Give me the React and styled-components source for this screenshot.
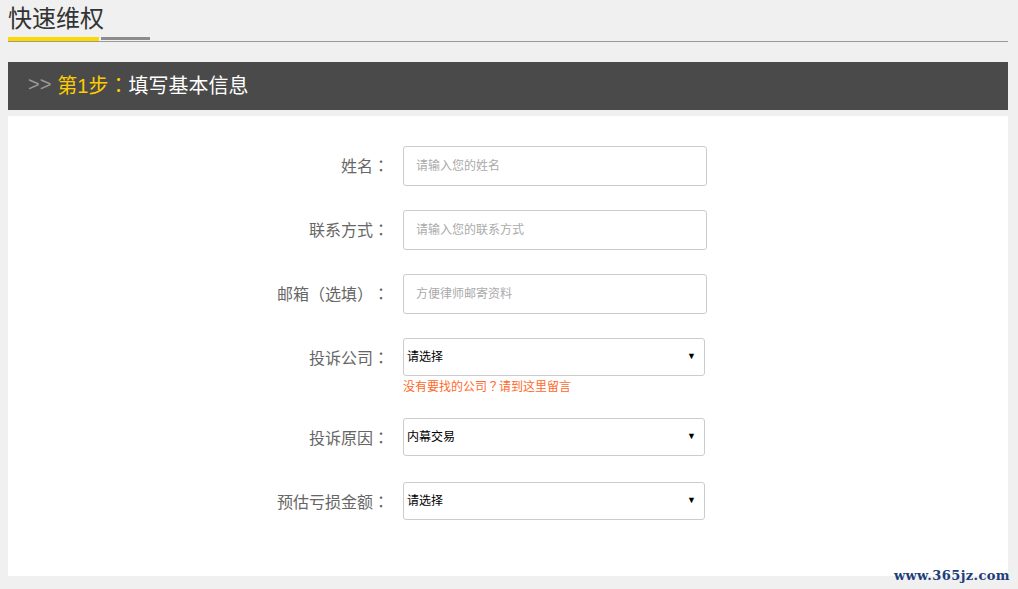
import { createGlobalStyle } from "styled-components";
import styled from "styled-components";

const Global = createGlobalStyle`
  html, body { margin: 0; padding: 0; background: #f0f0f0; }
  body { font-family: "Liberation Sans", "Noto Sans CJK SC", sans-serif; }
  * { box-sizing: border-box; }
`;

const Page = styled.div`
  position: relative;
  padding: 0 10px 13px 8px;
  min-height: 589px;
`;

const TitleBar = styled.div`
  display: flex;
  align-items: flex-end;
  border-bottom: 1px solid #999;
  height: 42px;
`;

const TitleTab = styled.div`
  display: flex;
  flex-direction: column;
`;

const Title = styled.h2`
  margin: 0;
  font-weight: normal;
  font-size: 24px;
  line-height: 36px;
  color: #333;
  padding-top: 3px;
  padding-right: 2px;
`;

const Underline = styled.div`
  display: flex;
  align-items: flex-start;
  gap: 2px;
`;

const Bar = styled.span`
  display: block;
  height: ${(p) => p.$h}px;
  width: ${(p) => p.$w}px;
  background: ${(p) => p.$c};
`;

const StepHeader = styled.div`
  margin-top: 20px;
  height: 48px;
  background: #4a4a4a;
  display: flex;
  align-items: center;
  padding: 0 0 3px 20px;
  font-size: 20px;
  color: #fff;
`;

const Arrows = styled.span`
  color: #999;
  margin-right: 6px;
`;

const Step = styled.span`
  color: #ffcc00;
`;

/* full-width punctuation centred in its box, as the original font draws it */
const Colon = styled.span`
  font-family: "Noto Sans CJK JP", sans-serif;
`;

const Panel = styled.div`
  margin-top: 6px;
  background: #fff;
  padding: 30px 0 32px;
  height: 460px;
`;

const Row = styled.div`
  display: flex;
  align-items: flex-start;
  margin-bottom: 24px;
`;

const Label = styled.label`
  width: 381px;
  height: 40px;
  display: flex;
  align-items: center;
  justify-content: flex-end;
  font-size: 16px;
  color: #666;
  margin-right: 14px;
  padding-bottom: 2px;
`;

const Input = styled.input`
  width: 304px;
  height: 40px;
  border: 1px solid #ccc;
  border-radius: 3px;
  padding: 0 12px;
  font-size: 12px;
  font-family: inherit;
  color: #333;
  outline: none;
  &::placeholder { color: #aaa; }
`;

const Field = styled.div`
  display: flex;
  flex-direction: column;
`;

const SelectBox = styled.div`
  position: relative;
  width: 302px;
  height: 38px;
`;

const Select = styled.select`
  appearance: none;
  width: 100%;
  height: 100%;
  border: 1px solid #ccc;
  border-radius: 3px;
  background: #fff;
  padding: 0 3px;
  font-size: 12px;
  font-family: inherit;
  color: #000;
  outline: none;
`;

const Caret = styled.span`
  position: absolute;
  right: 9px;
  top: 13px;
  font-size: 9px;
  line-height: 10px;
  color: #000;
  pointer-events: none;
`;

const Hint = styled.a`
  display: block;
  margin-top: 2px;
  height: 16px;
  font-size: 12px;
  line-height: 16px;
  color: #ff6a2b;
  text-decoration: none;
  overflow: visible;
`;

const Watermark = styled.div`
  position: absolute;
  right: 8px;
  bottom: 6px;
  font-family: "DejaVu Serif", serif;
  font-weight: bold;
  font-size: 13px;
  color: #1d3d7a;
  letter-spacing: 0.4px;
`;

function Dropdown({ value, options }) {
  return (
    <SelectBox>
      <Select defaultValue={value}>
        {options.map((o) => (
          <option key={o}>{o}</option>
        ))}
      </Select>
      <Caret>▼</Caret>
    </SelectBox>
  );
}

function FieldLabel({ children }) {
  return (
    <Label>
      {children}
      <Colon>：</Colon>
    </Label>
  );
}

export default function App() {
  return (
    <>
      <Global />
      <Page>
        <TitleBar>
          <TitleTab>
            <Title>快速维权</Title>
            <Underline>
              <Bar $w={91} $h={4} $c="#ffd800" />
              <Bar $w={49} $h={3} $c="#8c8c8c" />
            </Underline>
          </TitleTab>
        </TitleBar>

        <StepHeader>
          <Arrows>&gt;&gt;</Arrows>
          <Step>
            第1步<Colon>：</Colon>
          </Step>
          填写基本信息
        </StepHeader>

        <Panel>
          <Row>
            <FieldLabel>姓名</FieldLabel>
            <Input placeholder="请输入您的姓名" />
          </Row>
          <Row>
            <FieldLabel>联系方式</FieldLabel>
            <Input placeholder="请输入您的联系方式" />
          </Row>
          <Row>
            <FieldLabel>
              邮箱<Colon>（</Colon>选填<Colon>）</Colon>
            </FieldLabel>
            <Input placeholder="方便律师邮寄资料" />
          </Row>
          <Row>
            <FieldLabel>投诉公司</FieldLabel>
            <Field>
              <Dropdown value="请选择" options={["请选择"]} />
              <Hint href="#">
                没有要找的公司<Colon>？</Colon>请到这里留言
              </Hint>
            </Field>
          </Row>
          <Row>
            <FieldLabel>投诉原因</FieldLabel>
            <Dropdown value="内幕交易" options={["内幕交易", "虚假陈述", "其他"]} />
          </Row>
          <Row>
            <FieldLabel>预估亏损金额</FieldLabel>
            <Dropdown value="请选择" options={["请选择"]} />
          </Row>
        </Panel>

        <Watermark>www.365jz.com</Watermark>
      </Page>
    </>
  );
}
